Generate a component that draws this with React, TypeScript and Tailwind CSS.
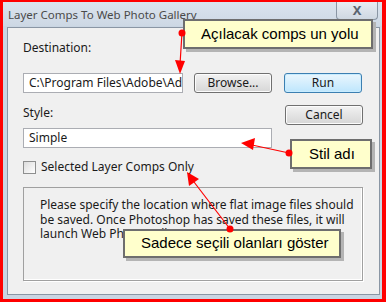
import React from "react";

const ui = { fontFamily: '"Noto Sans", "Open Sans", sans-serif' };
const note = { fontFamily: '"Liberation Sans", Arial, sans-serif' };

function Btn({ label, primary }: { label: string; primary?: boolean }) {
    return (
        <div
            className={`w-[78px] h-[20px] rounded-[3px] border flex items-center justify-center text-[12px] text-[#1a1a1a] ${
                primary
                    ? "border-[#3c7fb1] bg-gradient-to-b from-[#eaf6fd] to-[#bee6fd] shadow-[inset_0_0_0_1px_#c8ecff]"
                    : "border-[#707070] bg-gradient-to-b from-[#f2f2f2] to-[#d6d6d6] shadow-[inset_0_0_0_1px_#fcfcfc]"
            }`}
        >
            {label}
        </div>
    );
}

function Callout({ text, className }: { text: string; className: string }) {
    return (
        <div
            className={`absolute bg-[#ffffcc] border-2 border-[#6e6e6e] shadow-[3px_3px_0_#b4b4b4] flex items-center whitespace-nowrap text-[15px] text-black ${className}`}
            style={note}
        >
            {text}
        </div>
    );
}

export default function App() {
    return (
        <div className="relative w-[386px] h-[302px] overflow-hidden border-l-[3px] border-t-2 border-r-[4px] border-b-[3px] border-[#ff0000] bg-[#c9d5e2]" style={ui}>
            {/* title bar */}
            <div className="h-[24px] flex items-center justify-between pl-[5px] pr-[4px] bg-gradient-to-b from-[#dbe4ee] to-[#cdd8e4]">
                <span className="text-[11.5px] text-[#4a4a4a] mt-[2px]">Layer Comps To Web Photo Gallery</span>
                <div className="w-[42px] h-[18px] -mt-[6px] rounded-b-[4px] border border-t-0 border-[#8a96a4] bg-gradient-to-b from-[#e8edf3] to-[#cfd8e2] flex items-center justify-center text-[13px] font-bold text-[#5a6470]">
                    X
                </div>
            </div>

            {/* client area */}
            <div className="ml-[4px] mr-[2px] mt-[1px] h-[268px] border border-[#8a96a4] bg-[#f0f0f0] pl-[15px] pr-[16px]">
                <p className="pt-[12px] text-[12px] text-[#1a1a1a] leading-[16px]">Destination:</p>

                <div className="mt-[17px] flex items-center">
                    <div className="w-[160px] h-[20px] border border-[#abadb3] bg-white flex items-center pl-[5px] text-[12px] text-[#1a1a1a] overflow-hidden whitespace-nowrap">
                        C:\Program Files\Adobe\Adobe
                    </div>
                    <div className="ml-[11px]">
                        <Btn label="Browse..." />
                    </div>
                    <div className="ml-[12px]">
                        <Btn label="Run" primary />
                    </div>
                </div>

                <div className="mt-[12px] flex items-center justify-between">
                    <span className="text-[12px] text-[#1a1a1a] -mt-[4px]">Style:</span>
                    <Btn label="Cancel" />
                </div>

                <div className="mt-[3px] w-[249px] h-[20px] border border-[#abadb3] bg-white flex items-center pl-[5px] text-[12px] text-[#1a1a1a]">
                    Simple
                </div>

                <div className="mt-[10px] flex items-center gap-[5px]">
                    <div className="w-[13px] h-[13px] border border-[#8e8f8f] bg-gradient-to-br from-[#dcdcdc] to-[#ffffff]" />
                    <span className="text-[12px] text-[#1a1a1a]">Selected Layer Comps Only</span>
                </div>

                <div className="mt-[11px] w-[340px] h-[94px] border border-[#a0a0a0] shadow-[inset_-1px_-1px_0_#ffffff,1px_1px_0_#ffffff] pl-[16px] pt-[10px] text-[12px] leading-[14.5px] text-[#1a1a1a]">
                    Please specify the location where flat image files should
                    <br />
                    be saved. Once Photoshop has saved these files, it will
                    <br />
                    launch Web Photo Gallery.
                </div>
            </div>

            {/* annotations */}
            <Callout text="Açılacak comps un yolu" className="left-[180px] top-[17px] w-[190px] h-[30px] pl-[16px]" />
            <Callout text="Stil adı" className="left-[287px] top-[137px] w-[82px] h-[30px] pl-[17px]" />
            <Callout text="Sadece seçili olanları göster" className="left-[120px] top-[227px] w-[218px] h-[29px] pl-[16px]" />

            <svg className="absolute left-[-3px] top-[-2px]" width="386" height="302" viewBox="0 0 386 302">
                <g stroke="#ff0000" strokeWidth="1.2" fill="none">
                    <line x1="182" y1="33" x2="180" y2="64" />
                    <line x1="289" y1="153" x2="252" y2="145" />
                    <line x1="230" y1="229" x2="194" y2="182" />
                </g>
                <g fill="#ff0000">
                    <polygon points="180,74 175,60 185,61" />
                    <polygon points="241,143 255,138 253,150" />
                    <polygon points="187,172 199,179 189,186" />
                    <circle cx="182" cy="33" r="3.5" />
                    <circle cx="289" cy="153" r="3.5" />
                    <circle cx="230" cy="229" r="3.5" />
                </g>
            </svg>
        </div>
    );
}
